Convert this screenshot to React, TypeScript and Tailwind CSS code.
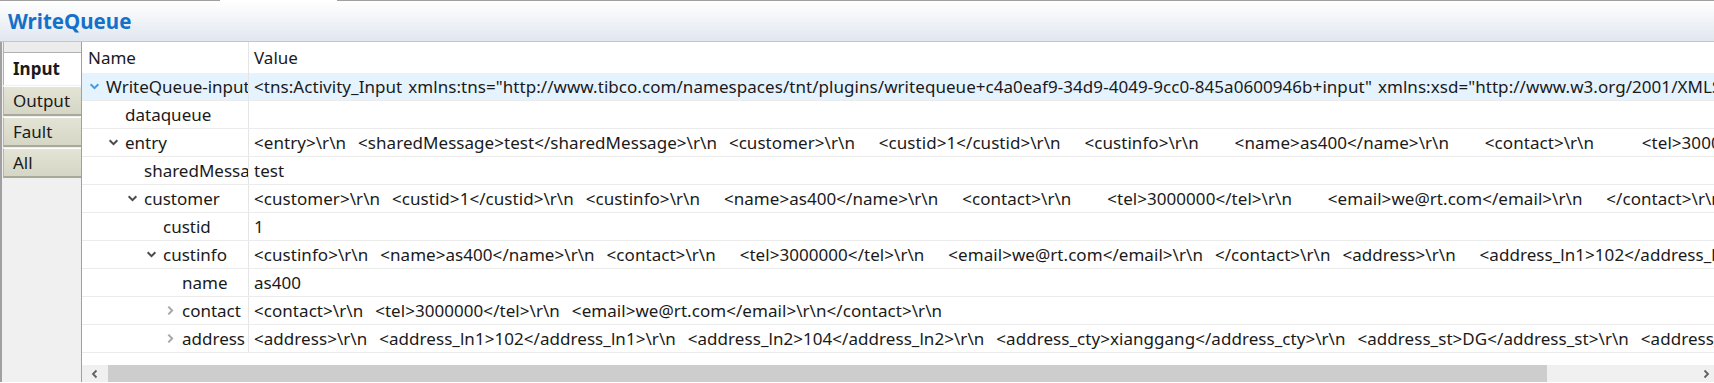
import * as React from 'react';

type Row = {
  name: string;
  value: string;
  level: number;
  toggle?: 'open' | 'closed';
  selected?: boolean;
};

const rows: Row[] = [
  {
    name: 'WriteQueue-input',
    level: 0,
    toggle: 'open',
    selected: true,
    value:
      '<tns:Activity_Input xmlns:tns="http://www.tibco.com/namespaces/tnt/plugins/writequeue+c4a0eaf9-34d9-4049-9cc0-845a0600946b+input" xmlns:xsd="http://www.w3.org/2001/XMLSchema">',
  },
  { name: 'dataqueue', level: 1, value: '' },
  {
    name: 'entry',
    level: 1,
    toggle: 'open',
    value:
      '<entry>\\r\\n  <sharedMessage>test</sharedMessage>\\r\\n  <customer>\\r\\n    <custid>1</custid>\\r\\n    <custinfo>\\r\\n      <name>as400</name>\\r\\n      <contact>\\r\\n        <tel>3000000</tel>\\r\\n',
  },
  { name: 'sharedMessage', level: 2, value: 'test' },
  {
    name: 'customer',
    level: 2,
    toggle: 'open',
    value:
      '<customer>\\r\\n  <custid>1</custid>\\r\\n  <custinfo>\\r\\n    <name>as400</name>\\r\\n    <contact>\\r\\n      <tel>3000000</tel>\\r\\n      <email>we@rt.com</email>\\r\\n    </contact>\\r\\n',
  },
  { name: 'custid', level: 3, value: '1' },
  {
    name: 'custinfo',
    level: 3,
    toggle: 'open',
    value:
      '<custinfo>\\r\\n  <name>as400</name>\\r\\n  <contact>\\r\\n    <tel>3000000</tel>\\r\\n    <email>we@rt.com</email>\\r\\n  </contact>\\r\\n  <address>\\r\\n    <address_ln1>102</address_ln1>\\r\\n',
  },
  { name: 'name', level: 4, value: 'as400' },
  {
    name: 'contact',
    level: 4,
    toggle: 'closed',
    value: '<contact>\\r\\n  <tel>3000000</tel>\\r\\n  <email>we@rt.com</email>\\r\\n</contact>\\r\\n',
  },
  {
    name: 'address',
    level: 4,
    toggle: 'closed',
    value:
      '<address>\\r\\n  <address_ln1>102</address_ln1>\\r\\n  <address_ln2>104</address_ln2>\\r\\n  <address_cty>xianggang</address_cty>\\r\\n  <address_st>DG</address_st>\\r\\n  <address_zip>',
  },
];

function Chevron({ kind, selected }: { kind: 'open' | 'closed'; selected?: boolean }) {
  if (kind === 'closed') {
    return (
      <svg width="11" height="11" viewBox="0 0 10 10" fill="none">
        <path d="M3 1.5 L6.5 5 L3 8.5" stroke="#a8a8a8" strokeWidth="1.8" />
      </svg>
    );
  }
  return (
    <svg width="11" height="11" viewBox="0 0 10 10" fill="none">
      <path
        d="M1.5 3 L5 6.5 L8.5 3"
        stroke={selected ? '#3b9de6' : '#4a4a4a'}
        strokeWidth="1.8"
      />
    </svg>
  );
}

const tabs = ['Input', 'Output', 'Fault', 'All'];

export default function App() {
  return (
    <div className="h-[383px] w-[1714px] overflow-hidden bg-white font-['Noto_Sans','Open_Sans',sans-serif] text-[17px] text-[#1a1a1a]">
      {/* editor tab edge */}
      <div className="flex h-px">
        <div className="w-[220px] bg-[#a0a0a0]" />
        <div className="w-[117px] bg-white" />
        <div className="flex-1 bg-[#a0a0a0]" />
      </div>

      {/* title */}
      <div className="flex h-[41px] items-center border-b border-[#b8c8da] bg-gradient-to-b from-white to-[#e1e7ef] pl-2">
        <span className="text-[20.5px] font-bold text-[#1471c8]">WriteQueue</span>
      </div>

      <div className="flex h-[340px]">
        {/* side tabs */}
        <div className="flex w-[82px] flex-col border-l-2 border-r border-[#a0a0a0] bg-[#f0f0f0] pl-px">
          <div className="h-[11px] border-b border-l border-[#b0b0b0] bg-[#ececec]" />
          {tabs.map((t, i) =>
            i === 0 ? (
              <div
                key={t}
                className="flex h-[32px] items-center border-l border-[#b0b0b0] bg-white pl-[9px] font-bold"
              >
                {t}
              </div>
            ) : (
              <div
                key={t}
                className="mt-px flex h-[30px] items-center border-b-2 border-l border-t border-b-[#a9a999] border-l-[#b8b8a8] border-t-white bg-gradient-to-b from-[#e4e4d6] to-[#d6d6c6] pl-[9px]"
              >
                {t}
              </div>
            )
          )}
        </div>

        {/* tree table */}
        <div className="flex min-w-0 flex-1 flex-col">
          <div className="min-h-0 flex-1 overflow-hidden">
            <div className="flex h-[31px]">
              <div className="flex w-[167px] shrink-0 items-center border-r border-[#e5e5e5] pl-[6px]">
                Name
              </div>
              <div className="flex items-center pl-[5px]">Value</div>
            </div>
            {rows.map((r) => (
              <div
                key={r.name}
                className={`flex h-[28px] border-b border-[#ebebeb] ${r.selected ? 'bg-[#e5f3ff]' : ''}`}
              >
                <div className="flex w-[167px] shrink-0 items-center overflow-hidden whitespace-nowrap border-r border-[#e5e5e5]">
                  <div className="shrink-0" style={{ width: 4 + 19 * r.level }} />
                  <div className="flex w-[16px] shrink-0 justify-center">
                    {r.toggle && <Chevron kind={r.toggle} selected={r.selected} />}
                  </div>
                  <span className="pl-[4px]">{r.name}</span>
                </div>
                <div className="flex min-w-0 flex-1 items-center overflow-hidden whitespace-pre pl-[5px] tracking-[0.05px] [word-spacing:1.5px]">
                  {r.value}
                </div>
              </div>
            ))}
          </div>

          {/* horizontal scrollbar */}
          <div className="flex h-[17px] shrink-0 bg-[#f0f0f0]">
            <div className="flex w-[26px] items-center justify-center">
              <svg width="10" height="10" viewBox="0 0 10 10" fill="none">
                <path d="M6.5 1.5 L3 5 L6.5 8.5" stroke="#606060" strokeWidth="1.8" />
              </svg>
            </div>
            <div className="w-[1439px] bg-[#cdcdcd]" />
            <div className="flex-1" />
            <div className="flex w-[17px] items-center justify-center">
              <svg width="10" height="10" viewBox="0 0 10 10" fill="none">
                <path d="M3.5 1.5 L7 5 L3.5 8.5" stroke="#606060" strokeWidth="1.8" />
              </svg>
            </div>
          </div>
        </div>
      </div>
    </div>
  );
}
